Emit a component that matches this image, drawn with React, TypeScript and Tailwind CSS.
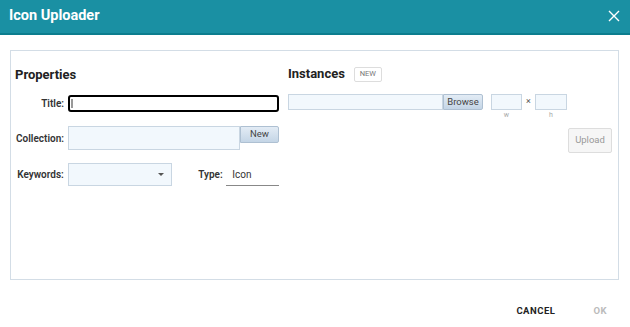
import React from "react";

export default function App() {
  const font = { fontFamily: "Roboto, 'Liberation Sans', sans-serif" };
  return (
    <div className="w-[630px] h-[327px] bg-white overflow-hidden" style={font}>
      {/* Header */}
      <div className="h-[35px] bg-[#1a90a3] border-b-2 border-[#0c7d8e] flex items-center justify-between pl-[9px] pr-[10px]">
        <span className="text-white font-bold text-[14.5px] leading-none">Icon Uploader</span>
        <svg width="12" height="12" viewBox="0 0 12 12" className="mb-[1px]">
          <path d="M1 1 L11 11 M11 1 L1 11" stroke="white" strokeWidth="1.4" fill="none" />
        </svg>
      </div>

      {/* Panel */}
      <div className="ml-[10px] mt-[15px] w-[609px] h-[230px] border border-[#d3dde6] pl-[4px] pt-[16px] pr-[6px] flex">
        {/* Left column */}
        <div className="w-[264px] flex flex-col">
          <div className="h-[16px] flex items-center text-[13px] font-bold text-[#222]">Properties</div>
          <div className="mt-[12px] flex items-center h-[17px]">
            <div className="w-[49px] text-right text-[10px] font-semibold text-[#333]">Title:</div>
            <div className="ml-[4px] w-[211px] h-[17px] border-2 border-black rounded-[3px] flex items-center pl-[1px]">
              <div className="w-[2px] h-[9px] bg-[#999]" />
            </div>
          </div>
          <div className="mt-[14px] flex items-start h-[24px]">
            <div className="w-[49px] text-right text-[10px] font-semibold text-[#333] h-[24px] flex items-center justify-end">Collection:</div>
            <div className="ml-[4px] w-[172px] h-[24px] bg-[#f2f8fd] border border-[#c9d6e2]" />
            <div className="w-[39px] h-[17px] border border-[#aec0d2] rounded-r-[2px] bg-gradient-to-b from-[#e3ecf5] to-[#c4d5e6] text-[9.5px] text-[#444] flex items-center justify-center">New</div>
          </div>
          <div className="mt-[13px] flex items-center h-[23px]">
            <div className="w-[49px] text-right text-[10px] font-semibold text-[#333]">Keywords:</div>
            <div className="ml-[4px] w-[105px] h-[23px] bg-[#f2f8fd] border border-[#c9d6e2] flex items-center justify-end pr-[7px]">
              <svg width="6" height="4" viewBox="0 0 6 4"><path d="M0 0 L6 0 L3 3 Z" fill="#555" /></svg>
            </div>
            <div className="ml-[26px] w-[24px] text-[10px] font-semibold text-[#333]">Type:</div>
            <div className="ml-[4px] w-[53px] h-[22px] border-b border-[#888] flex items-center pl-[6px] text-[10px] text-[#333]">Icon</div>
          </div>
        </div>

        {/* Right column */}
        <div className="ml-[9px] flex-1 flex flex-col">
          <div className="h-[16px] flex items-center -mt-[1px]">
            <span className="text-[13px] font-bold text-[#222]">Instances</span>
            <span className="ml-[9px] h-[15px] w-[28px] border border-[#ddd] rounded-[2px] text-[7.5px] text-[#777] flex items-center justify-center">NEW</span>
          </div>
          <div className="mt-[12px] flex items-start">
            <div className="w-[155px] h-[16px] bg-[#f2f8fd] border border-[#c9d6e2]" />
            <div className="w-[40px] h-[16px] border border-[#aec0d2] rounded-r-[2px] bg-gradient-to-b from-[#e3ecf5] to-[#c4d5e6] text-[9.5px] text-[#444] flex items-center justify-center">Browse</div>
            <div className="ml-[8px] flex flex-col items-center">
              <div className="w-[31px] h-[16px] bg-[#f2f8fd] border border-[#c9d6e2]" />
              <span className="text-[7px] text-[#aaa] leading-none mt-[2px]">w</span>
            </div>
            <div className="w-[13px] h-[16px] flex items-center justify-center text-[9px] text-[#555]">×</div>
            <div className="flex flex-col items-center">
              <div className="w-[32px] h-[16px] bg-[#f2f8fd] border border-[#c9d6e2]" />
              <span className="text-[7px] text-[#aaa] leading-none mt-[2px]">h</span>
            </div>
          </div>
          <div className="mt-[9px] flex justify-end">
            <div className="w-[44px] h-[25px] bg-[#f6f6f6] border border-[#ddd] rounded-[2px] text-[9.5px] text-[#999] flex items-center justify-center">Upload</div>
          </div>
        </div>
      </div>

      {/* Footer */}
      <div className="h-[62px] flex items-center justify-end pr-[23px]">
        <span className="text-[9.5px] font-bold tracking-[0.5px] text-[#222]">CANCEL</span>
        <span className="ml-[38px] text-[9.5px] font-bold tracking-[0.5px] text-[#bbb]">OK</span>
      </div>
    </div>
  );
}
